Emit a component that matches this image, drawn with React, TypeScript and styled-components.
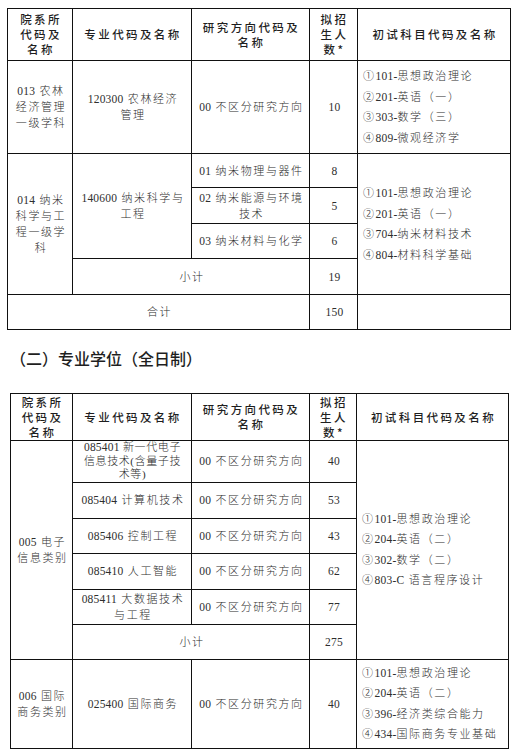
import React from 'react';
import styled, { createGlobalStyle } from 'styled-components';

const GlobalStyle = createGlobalStyle`
  html, body {
    margin: 0;
    padding: 0;
    background: #fff;
  }
  body {
    font-family: "Liberation Serif", "Noto Sans CJK SC", serif;
    color: #2e2e2e;
  }
`;

const LATIN_SPLIT = /([0-9A-Za-z\-*.]+)/;
const LATIN_ONLY = /^[0-9A-Za-z\-*.]+$/;

const Text = ({ lines }: { lines: string[] }) => (
  <>
    {lines.map((line, i) => (
      <React.Fragment key={i}>
        {i > 0 && <br />}
        {line
          .split(LATIN_SPLIT)
          .filter(Boolean)
          .map((part, j) =>
            LATIN_ONLY.test(part) ? (
              <Latin key={j}>{part}</Latin>
            ) : (
              <React.Fragment key={j}>{part}</React.Fragment>
            ),
          )}
      </React.Fragment>
    ))}
  </>
);

const Columns = ({ cols }: { cols: number[] }) => (
  <colgroup>
    {cols.map((w, i) => (
      <Col key={i} $w={w} />
    ))}
  </colgroup>
);

const HeadRow = ({ h }: { h: number }) => (
  <Row $h={h}>
    <Head>
      院系所
      <br />
      代码及
      <br />
      名称
    </Head>
    <Head>专业代码及名称</Head>
    <Head>
      研究方向代码及
      <br />
      名称
    </Head>
    <Head>
      拟招
      <br />
      生人
      <br />
      数*
    </Head>
    <Head>初试科目代码及名称</Head>
  </Row>
);

export default function App() {
  return (
    <>
      <GlobalStyle />
      <Page>
        <Table $left={7} $width={503}>
          <Columns cols={[65, 119, 118, 48, 153]} />
          <tbody>
            <HeadRow h={52} />
            <Row $h={93}>
              <Cell>
                <Text lines={['013 农林', '经济管理', '一级学科']} />
              </Cell>
              <Cell>
                <Text lines={['120300 农林经济', '管理']} />
              </Cell>
              <Cell>
                <Text lines={['00 不区分研究方向']} />
              </Cell>
              <Cell>
                <Text lines={['10']} />
              </Cell>
              <Exam>
                <Text lines={['①101-思想政治理论', '②201-英语（一）', '③303-数学（三）', '④809-微观经济学']} />
              </Exam>
            </Row>
            <Row $h={34}>
              <Cell rowSpan={4}>
                <Text lines={['014 纳米', '科学与工', '程一级学', '科']} />
              </Cell>
              <Cell rowSpan={3}>
                <Text lines={['140600 纳米科学与', '工程']} />
              </Cell>
              <Cell>
                <Text lines={['01 纳米物理与器件']} />
              </Cell>
              <Cell>
                <Text lines={['8']} />
              </Cell>
              <Exam rowSpan={4}>
                <Text lines={['①101-思想政治理论', '②201-英语（一）', '③704-纳米材料技术', '④804-材料科学基础']} />
              </Exam>
            </Row>
            <Row $h={36}>
              <Cell>
                <Text lines={['02 纳米能源与环境', '技术']} />
              </Cell>
              <Cell>
                <Text lines={['5']} />
              </Cell>
            </Row>
            <Row $h={35}>
              <Cell>
                <Text lines={['03 纳米材料与化学']} />
              </Cell>
              <Cell>
                <Text lines={['6']} />
              </Cell>
            </Row>
            <Row $h={36}>
              <Cell colSpan={2}>小计</Cell>
              <Cell>
                <Text lines={['19']} />
              </Cell>
            </Row>
            <Row $h={35}>
              <Cell colSpan={3}>合计</Cell>
              <Cell>
                <Text lines={['150']} />
              </Cell>
              <Cell />
            </Row>
          </tbody>
        </Table>

        <Title>（二）专业学位（全日制）</Title>

        <Table $left={10} $width={498}>
          <Columns cols={[62, 119, 118, 47, 152]} />
          <tbody>
            <HeadRow h={47} />
            <Row $h={40}>
              <Cell rowSpan={6}>
                <Text lines={['005 电子', '信息类别']} />
              </Cell>
              <Cell $tight>
                <Text lines={['085401 新一代电子', '信息技术(含量子技', '术等)']} />
              </Cell>
              <Cell>
                <Text lines={['00 不区分研究方向']} />
              </Cell>
              <Cell>
                <Text lines={['40']} />
              </Cell>
              <Exam rowSpan={6}>
                <Text lines={['①101-思想政治理论', '②204-英语（二）', '③302-数学（二）', '④803-C 语言程序设计']} />
              </Exam>
            </Row>
            <Row $h={36}>
              <Cell>
                <Text lines={['085404 计算机技术']} />
              </Cell>
              <Cell>
                <Text lines={['00 不区分研究方向']} />
              </Cell>
              <Cell>
                <Text lines={['53']} />
              </Cell>
            </Row>
            <Row $h={35}>
              <Cell>
                <Text lines={['085406 控制工程']} />
              </Cell>
              <Cell>
                <Text lines={['00 不区分研究方向']} />
              </Cell>
              <Cell>
                <Text lines={['43']} />
              </Cell>
            </Row>
            <Row $h={36}>
              <Cell>
                <Text lines={['085410 人工智能']} />
              </Cell>
              <Cell>
                <Text lines={['00 不区分研究方向']} />
              </Cell>
              <Cell>
                <Text lines={['62']} />
              </Cell>
            </Row>
            <Row $h={35}>
              <Cell>
                <Text lines={['085411 大数据技术', '与工程']} />
              </Cell>
              <Cell>
                <Text lines={['00 不区分研究方向']} />
              </Cell>
              <Cell>
                <Text lines={['77']} />
              </Cell>
            </Row>
            <Row $h={35}>
              <Cell colSpan={2}>小计</Cell>
              <Cell>
                <Text lines={['275']} />
              </Cell>
            </Row>
            <Row $h={89}>
              <Cell>
                <Text lines={['006 国际', '商务类别']} />
              </Cell>
              <Cell>
                <Text lines={['025400 国际商务']} />
              </Cell>
              <Cell>
                <Text lines={['00 不区分研究方向']} />
              </Cell>
              <Cell>
                <Text lines={['40']} />
              </Cell>
              <Exam>
                <Text lines={['①101-思想政治理论', '②204-英语（二）', '③396-经济类综合能力', '④434-国际商务专业基础']} />
              </Exam>
            </Row>
          </tbody>
        </Table>
      </Page>
    </>
  );
}

const Page = styled.div`
  width: 521px;
  padding-top: 8px;
  box-sizing: border-box;
`;

const Table = styled.table<{ $left: number; $width: number }>`
  border-collapse: collapse;
  table-layout: fixed;
  width: ${p => p.$width}px;
  margin-left: ${p => p.$left}px;
`;

const Col = styled.col<{ $w: number }>`
  width: ${p => p.$w}px;
`;

const Row = styled.tr<{ $h: number }>`
  height: ${p => p.$h}px;
`;

const Head = styled.th`
  border: 1px solid #111;
  padding: 0 0 0 2px;
  font-family: "Noto Sans CJK SC", sans-serif;
  font-weight: 500;
  font-size: 11.5px;
  letter-spacing: 2.4px;
  line-height: 15px;
  color: #1f1f1f;
  text-align: center;
  vertical-align: middle;
`;

const Cell = styled.td<{ $tight?: boolean }>`
  border: 1px solid #111;
  padding: 0 0 0 ${p => (p.$tight ? 1 : 2)}px;
  font-family: "Liberation Serif", "Noto Sans CJK SC", serif;
  font-weight: 300;
  font-size: 11px;
  letter-spacing: ${p => (p.$tight ? 0.6 : 1.6)}px;
  line-height: ${p => (p.$tight ? 13.5 : 16)}px;
  color: #2e2e2e;
  text-align: center;
  vertical-align: middle;
`;

const Exam = styled.td`
  border: 1px solid #111;
  padding: 0 0 0 5px;
  font-family: "Liberation Serif", "Noto Sans CJK SC", serif;
  font-weight: 300;
  font-size: 11px;
  letter-spacing: 1.6px;
  line-height: 20.5px;
  color: #2e2e2e;
  text-align: left;
  vertical-align: middle;
  white-space: nowrap;
`;

const Latin = styled.span`
  font-family: "Liberation Serif", serif;
  font-weight: 400;
  font-size: 11.5px;
  letter-spacing: 0.2px;
`;

const Title = styled.h2`
  margin: 17px 0 24px 10px;
  font-family: "Noto Sans CJK SC", sans-serif;
  font-weight: 500;
  font-size: 16px;
  line-height: 22px;
  color: #1f1f1f;
`;
